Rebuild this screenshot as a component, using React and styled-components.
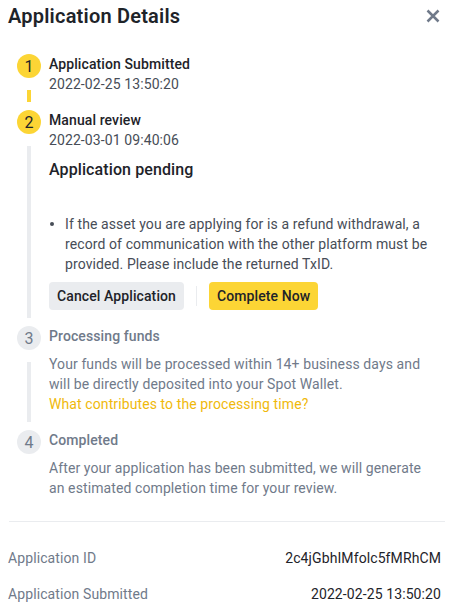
import styled, { createGlobalStyle } from 'styled-components'

const GlobalStyle = createGlobalStyle`
  body {
    margin: 0;
    background: #ffffff;
    font-family: Roboto, "Noto Sans", sans-serif;
    letter-spacing: 0.1px;
    color: #1e2329;
  }
`

const Panel = styled.div`
  width: 449px;
  box-sizing: border-box;
  padding: 0 8px;
`

const Header = styled.div`
  display: flex;
  align-items: center;
  justify-content: space-between;
  height: 32px;
  margin-bottom: 22px;
`

const Title = styled.h1`
  margin: 0;
  font-size: 20px;
  font-weight: 600;
  letter-spacing: 0.2px;
  color: #1e2329;
`

const CloseButton = styled.button`
  border: 0;
  background: none;
  padding: 0;
  width: 16px;
  height: 16px;
  display: flex;
  align-items: center;
  justify-content: center;
  color: #707a8a;
  cursor: pointer;
`

const Step = styled.div`
  display: flex;
`

const Rail = styled.div`
  width: 41px;
  flex-shrink: 0;
  display: flex;
  flex-direction: column;
  align-items: flex-start;
  padding-left: 9px;
  box-sizing: border-box;
`

const Dot = styled.div`
  width: 24px;
  height: 24px;
  border-radius: 50%;
  display: flex;
  align-items: center;
  justify-content: center;
  font-size: 16px;
  background: ${p => (p.$active ? '#fcd535' : '#eaecef')};
  color: ${p => (p.$active ? '#1e2329' : '#707a8a')};
`

const Connector = styled.div`
  width: 4px;
  margin: 12px 0 8px 10px;
  flex: ${p => (p.$short ? '0 0 12px' : '1')};
  background: ${p => (p.$done ? '#fcd535' : '#eaecef')};
`

const Body = styled.div`
  flex: 1;
  padding-bottom: ${p => (p.$last ? '0' : '16px')};
`

const StepTitle = styled.div`
  font-size: 14px;
  line-height: 20px;
  font-weight: 500;
  color: ${p => (p.$muted ? '#707a8a' : '#1e2329')};
`

const Time = styled.div`
  font-size: 14px;
  line-height: 20px;
  color: #474d57;
`

const Desc = styled.div`
  margin-top: 8px;
  font-size: 14px;
  line-height: 20px;
  color: #707a8a;
`

const Link = styled.a`
  display: block;
  color: #f0b90b;
  text-decoration: none;
  cursor: pointer;
`

const Pending = styled.div`
  margin-top: 8px;
  font-size: 16px;
  line-height: 24px;
  font-weight: 500;
  color: #1e2329;
`

const Notes = styled.ul`
  list-style: none;
  margin: 32px 0 0;
  padding: 0;
`

const Note = styled.li`
  display: flex;
  gap: 11px;
  font-size: 14px;
  line-height: 20px;
  color: #474d57;

  &::before {
    content: '';
    flex-shrink: 0;
    width: 4px;
    height: 4px;
    margin: 8px 0 0 1px;
    border-radius: 50%;
    background: #474d57;
  }
`

const Actions = styled.div`
  display: flex;
  align-items: center;
  gap: 12px;
  margin-top: 8px;
`

const Button = styled.button`
  height: 28px;
  padding: 0 8px;
  border: 0;
  border-radius: 4px;
  font-family: inherit;
  font-size: 14px;
  font-weight: 500;
  letter-spacing: 0.1px;
  color: #1e2329;
  background: ${p => (p.$primary ? '#fcd535' : '#eaecef')};
  cursor: pointer;
`

const Separator = styled.div`
  width: 1px;
  height: 20px;
  background: #eaecef;
`

const Divider = styled.hr`
  border: 0;
  border-top: 1px solid #eaecef;
  margin: 23px -4px 26px 1px;
`

const InfoRow = styled.div`
  display: flex;
  justify-content: space-between;
  font-size: 14px;
  line-height: 20px;
  margin-bottom: 16px;
`

const InfoLabel = styled.span`
  color: #707a8a;
`

const InfoValue = styled.span`
  color: #1e2329;
`

const CloseIcon = () => (
  <svg width="14" height="14" viewBox="0 0 14 14" fill="none">
    <path d="M1.5 1.5L12.5 12.5M12.5 1.5L1.5 12.5" stroke="currentColor" strokeWidth="2.5" />
  </svg>
)

export default function App() {
  return (
    <Panel>
      <GlobalStyle />
      <Header>
        <Title>Application Details</Title>
        <CloseButton aria-label="Close">
          <CloseIcon />
        </CloseButton>
      </Header>

      <Step>
        <Rail>
          <Dot $active>1</Dot>
          <Connector $done $short />
        </Rail>
        <Body>
          <StepTitle>Application Submitted</StepTitle>
          <Time>2022-02-25 13:50:20</Time>
        </Body>
      </Step>

      <Step>
        <Rail>
          <Dot $active>2</Dot>
          <Connector />
        </Rail>
        <Body>
          <StepTitle>Manual review</StepTitle>
          <Time>2022-03-01 09:40:06</Time>
          <Pending>Application pending</Pending>
          <Notes>
            <Note>
              <span>
                If the asset you are applying for is a refund withdrawal, a<br />
                record of communication with the other platform must be<br />
                provided. Please include the returned TxID.
              </span>
            </Note>
          </Notes>
          <Actions>
            <Button>Cancel Application</Button>
            <Separator />
            <Button $primary>Complete Now</Button>
          </Actions>
        </Body>
      </Step>

      <Step>
        <Rail>
          <Dot>3</Dot>
          <Connector />
        </Rail>
        <Body>
          <StepTitle $muted>Processing funds</StepTitle>
          <Desc>
            Your funds will be processed within 14+ business days and<br />
            will be directly deposited into your Spot Wallet.
            <Link>What contributes to the processing time?</Link>
          </Desc>
        </Body>
      </Step>

      <Step>
        <Rail>
          <Dot>4</Dot>
        </Rail>
        <Body $last>
          <StepTitle $muted>Completed</StepTitle>
          <Desc>
            After your application has been submitted, we will generate<br />
            an estimated completion time for your review.
          </Desc>
        </Body>
      </Step>

      <Divider />

      <InfoRow>
        <InfoLabel>Application ID</InfoLabel>
        <InfoValue>2c4jGbhIMfolc5fMRhCM</InfoValue>
      </InfoRow>
      <InfoRow>
        <InfoLabel>Application Submitted</InfoLabel>
        <InfoValue>2022-02-25 13:50:20</InfoValue>
      </InfoRow>
    </Panel>
  )
}
